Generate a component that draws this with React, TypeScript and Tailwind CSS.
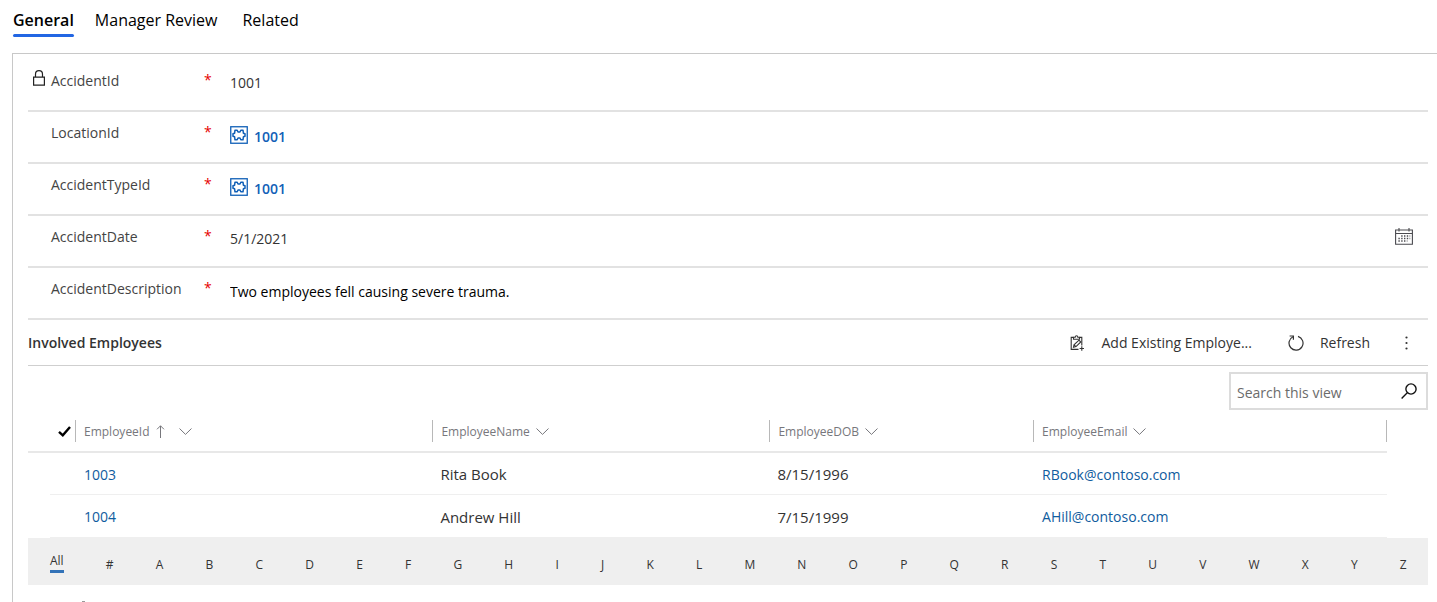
import React from "react";

const letters = ["#", ..."ABCDEFGHIJKLMNOPQRSTUVWXYZ".split("")];

const employees = [
  { id: "1003", name: "Rita Book", dob: "8/15/1996", email: "RBook@contoso.com" },
  { id: "1004", name: "Andrew Hill", dob: "7/15/1999", email: "AHill@contoso.com" },
];

function LockIcon() {
  return (
    <svg className="h-4 w-3" viewBox="0 0 12 16" fill="none" stroke="#222" strokeWidth="1.2" aria-hidden="true">
      <path d="M0.6 7.1h10.8v8.1H0.6z M2.5 7V4.2a3.5 3.5 0 0 1 7 0V7" />
    </svg>
  );
}

function EntityIcon() {
  return (
    <svg className="size-[18px]" viewBox="0 0 18 18" fill="none" stroke="#1160b7" aria-hidden="true">
      <rect x="0.75" y="0.75" width="16.5" height="16.5" strokeWidth="1.3" />
      <path
        d="M5 4.2H7.2L8 6H10L10.8 4.2H13L13.4 7.2L15 7.7V10.3L13.4 10.8L13 13.8H10.8L10 12H8L7.2 13.8H5L4.6 10.8L3 10.3V7.7L4.6 7.2Z"
        strokeWidth="1.5"
        strokeLinejoin="round"
      />
    </svg>
  );
}

function CalendarIcon() {
  return (
    <svg className="h-[17px] w-[18px]" viewBox="0 0 18 17" fill="none" stroke="#4a4a4f" aria-hidden="true">
      <path d="M0.6 2h16.8v14.2H0.6z M0.6 5.5h16.8" strokeWidth="1.1" />
      <path d="M4 0v3.5M14 0v3.5" strokeWidth="1.1" />
      <path d="M6.2 8h9M3.4 10.5h11.8M3.4 13h9" strokeWidth="1.4" strokeDasharray="1.4 1.4" />
    </svg>
  );
}

function ClipboardIcon() {
  return (
    <svg className="size-4" viewBox="0 0 16 16" fill="none" stroke="#333" strokeWidth="1.1" aria-hidden="true">
      <path d="M9.5 14.4H2.2V2.4H4.5M10.5 2.4H12.8V10.5" />
      <path d="M4.5 4.2V2.2H6.2C6.2 0.3 8.8 0.3 8.8 2.2H10.5V4.2Z" />
      <path d="M4.5 12.3L5 9.8L10 5.2L11.8 7L7 11.6ZM5 9.8L7 11.6" />
      <path d="M12.8 11.3v4.4M10.6 13.5H15" />
    </svg>
  );
}

function RefreshIcon() {
  return (
    <svg className="size-4" viewBox="0 0 16 16" fill="none" stroke="#333" strokeWidth="1.2" aria-hidden="true">
      <path d="M10 1.4A7 7 0 1 1 5 1.8" />
      <path d="M1.6 1H5.4V4.8" />
    </svg>
  );
}

function SearchIcon() {
  return (
    <svg className="size-4" viewBox="0 0 16 16" fill="none" stroke="#111" strokeWidth="1.4" aria-hidden="true">
      <circle cx="10" cy="6" r="5.1" />
      <path d="M6.3 9.7L0.6 15.4" />
    </svg>
  );
}

function Chevron() {
  return (
    <svg className="h-[7px] w-[13px]" viewBox="0 0 13 7" fill="none" stroke="#77777c" aria-hidden="true">
      <path d="M0.5 0.5L6.5 6.4L12.5 0.5" />
    </svg>
  );
}

type FieldProps = { id: string; label: string; locked?: boolean; tall?: boolean; children: React.ReactNode };

function Field({ id, label, locked, tall, children }: FieldProps) {
  return (
    <div className={`flex items-start border-b-2 border-[#e2e2e2] ${tall ? "h-[58px] pt-3.5" : "h-[52px] pt-2"}`}>
      <span className="flex w-[23px] pl-[5px] pt-0.5">{locked && <LockIcon />}</span>
      <label htmlFor={id} className="w-[153px] text-sm leading-[26px] text-[#444]">
        {label}
      </label>
      <span className="w-[26px] text-sm leading-6 text-[#e60000]">*</span>
      <div className="flex h-[30px] min-w-0 flex-1 items-center text-sm">{children}</div>
    </div>
  );
}

function Lookup({ id }: { id: string }) {
  return (
    <a id={id} href="#record" className="flex items-center gap-1.5 font-semibold text-[#1160b7]">
      <EntityIcon />
      <span className="pt-1">1001</span>
    </a>
  );
}

function ColumnHead({ title, sorted, last }: { title: string; sorted?: boolean; last?: boolean }) {
  return (
    <th className="border-b-2 border-[#e8e8e8] p-0 font-normal">
      <div className={`flex h-[22px] items-center border-l border-[#b8b8b8] pl-2 ${last ? "border-r" : ""}`}>
        <button className="flex items-center gap-1.5 pt-0.5 text-xs text-[#77777c]">
          {title}
          {sorted && (
            <svg className="mr-2 h-[13px] w-[9px]" viewBox="0 0 9 13" fill="none" stroke="#77777c" aria-hidden="true">
              <path d="M4.5 13V0.8M1 4.3L4.5 0.8L8 4.3" />
            </svg>
          )}
          <Chevron />
        </button>
      </div>
    </th>
  );
}

export default function App() {
  return (
    <div className="flex h-screen flex-col overflow-hidden bg-white font-['Open_Sans','Noto_Sans',sans-serif] text-[#333]">
      <nav className="flex gap-[21px] pl-[13px] pt-1.5 text-base leading-7 text-black">
        <a href="#general" className="font-semibold">
          General
          <span className="block h-[3px] rounded-full bg-[#2266e3]" />
        </a>
        <a href="#review">Manager Review</a>
        <a href="#related" className="ml-1">Related</a>
      </nav>

      <main className="ml-3 mt-4 flex-1 border-l border-t border-[#c8c8c8] pl-[15px] pr-[9px]">
        <Field id="accident-id" label="AccidentId" locked tall>
          <input id="accident-id" className="w-full bg-transparent outline-none" defaultValue="1001" readOnly />
        </Field>
        <Field id="location-id" label="LocationId">
          <Lookup id="location-id" />
        </Field>
        <Field id="type-id" label="AccidentTypeId">
          <Lookup id="type-id" />
        </Field>
        <Field id="accident-date" label="AccidentDate">
          <input id="accident-date" className="min-w-0 flex-1 bg-transparent outline-none" defaultValue="5/1/2021" />
          <button aria-label="Choose date" className="mr-[15px] pb-1.5">
            <CalendarIcon />
          </button>
        </Field>
        <Field id="description" label="AccidentDescription">
          <input
            id="description"
            className="w-full bg-transparent pt-0.5 text-black outline-none"
            defaultValue="Two employees fell causing severe trauma."
          />
        </Field>

        <section>
          <div className="flex h-[46px] items-center border-b border-[#cfcfcf] text-sm">
            <h2 className="flex-1 text-sm font-semibold">Involved Employees</h2>
            <button className="flex items-center gap-4">
              <ClipboardIcon />
              Add Existing Employe...
            </button>
            <button className="ml-9 flex items-center gap-4">
              <RefreshIcon />
              Refresh
            </button>
            <button aria-label="More commands" className="ml-[35px] mr-5">
              <svg className="h-4 w-[3px]" viewBox="0 0 3 16" fill="#333" aria-hidden="true">
                <circle cx="1.5" cy="2.5" r="1.1" />
                <circle cx="1.5" cy="8" r="1.1" />
                <circle cx="1.5" cy="13.5" r="1.1" />
              </svg>
            </button>
          </div>

          <div className="mt-1.5 flex justify-end">
            <div className="flex h-[38px] w-[199px] items-center border-2 border-[#dcdcdc] px-1.5">
              <input
                aria-label="Search this view"
                placeholder="Search this view"
                className="min-w-0 flex-1 pt-1 text-sm outline-none placeholder:text-[#6b6b6b]"
              />
              <button aria-label="Search" className="mr-[3px]">
                <SearchIcon />
              </button>
            </div>
          </div>

          <div className="pr-[41px]">
            <table className="w-full table-fixed border-separate border-spacing-0 text-left text-[15px]">
              <colgroup>
                <col className="w-[22px]" />
                <col className="w-[25px]" />
                <col className="w-[26.3%]" />
                <col className="w-[24.8%]" />
                <col className="w-[19.4%]" />
                <col />
              </colgroup>
              <thead>
                <tr className="h-[43px]">
                  <th className="border-b-2 border-[#e8e8e8] p-0" />
                  <th className="border-b-2 border-[#e8e8e8] p-0">
                    <button aria-label="Select all" className="ml-2 block pt-0.5">
                      <svg className="h-[11px] w-[13px]" viewBox="0 0 13 11" fill="none" stroke="#000" strokeWidth="2.4" aria-hidden="true">
                        <path d="M1 5.8L4.8 9.3L12 1" />
                      </svg>
                    </button>
                  </th>
                  <ColumnHead title="EmployeeId" sorted />
                  <ColumnHead title="EmployeeName" />
                  <ColumnHead title="EmployeeDOB" />
                  <ColumnHead title="EmployeeEmail" last />
                </tr>
              </thead>
              <tbody>
                {employees.map((e) => (
                  <tr key={e.id} className="h-[43px] first:h-[42px]">
                    <td className="p-0" />
                    <td className="border-b border-[#efefef] p-0" />
                    <td className="border-b border-[#efefef] p-0 pl-[9px] pt-0.5 text-sm">
                      <a href="#employee" className="text-[#105c9e]">{e.id}</a>
                    </td>
                    <td className="border-b border-[#efefef] p-0 pl-2 pt-0.5">{e.name}</td>
                    <td className="border-b border-[#efefef] p-0 pl-2 pt-0.5">{e.dob}</td>
                    <td className="border-b border-[#efefef] p-0 pl-[9px] pt-0.5 text-sm">
                      <a href="#email" className="text-[#105c9e]">{e.email}</a>
                    </td>
                  </tr>
                ))}
              </tbody>
            </table>
          </div>

          <div className="flex h-[47px] items-center justify-between bg-[#efefef] pl-[22px] pr-[21px] text-xs">
            <button className="border-b-[3px] border-[#3373b8] pt-0.5 leading-[18px]">All</button>
            {letters.map((l) => (
              <button key={l} className="pt-1.5">{l}</button>
            ))}
          </div>
          <div className="ml-[54px] mt-4 h-px w-[3px] bg-[#999]" />
        </section>
      </main>
    </div>
  );
}
